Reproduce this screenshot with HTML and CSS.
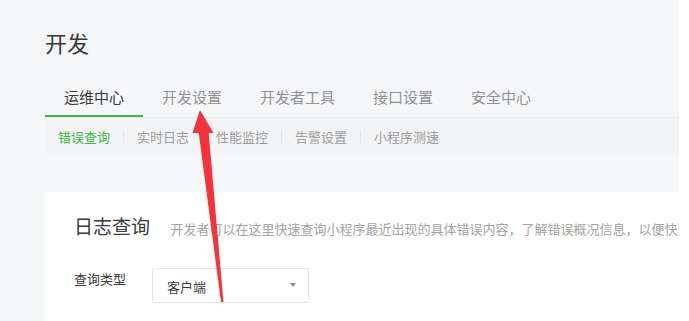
FILE: index.html
```html
<!DOCTYPE html>
<html lang="zh-CN">
  <head>
    <meta charset="UTF-8" />
    <meta name="viewport" content="width=device-width, initial-scale=1.0" />
    <title>开发</title>
    <link rel="stylesheet" href="styles.css">
  </head>
  <body>
    <div class="page">
      <div class="main">
        <h1 class="page-title">开发</h1>

        <!-- 一级导航 -->
        <ul class="tabs">
          <li class="tab active">运维中心</li>
          <li class="tab">开发设置</li>
          <li class="tab">开发者工具</li>
          <li class="tab">接口设置</li>
          <li class="tab">安全中心</li>
        </ul>

        <!-- 二级导航 -->
        <div class="subtabs">
          <span class="subtab active">错误查询</span>
          <span class="sep"></span>
          <span class="subtab">实时日志</span>
          <span class="sep"></span>
          <span class="subtab">性能监控</span>
          <span class="sep"></span>
          <span class="subtab">告警设置</span>
          <span class="sep"></span>
          <span class="subtab">小程序测速</span>
        </div>

        <div class="card">
          <div class="card-head">
            <span class="card-title">日志查询</span>
            <span class="card-desc">开发者可以在这里快速查询小程序最近出现的具体错误内容，了解错误概况信息，以便快速定位问题</span>
          </div>
          <div class="form-row">
            <label class="form-label">查询类型</label>
            <div class="select">
              <span class="select-value">客户端</span>
              <i class="caret"></i>
            </div>
          </div>
        </div>
      </div>

      <!-- 标注箭头 -->
      <svg class="mark-arrow" width="689" height="321" viewBox="0 0 689 321">
        <polygon points="200,110 213.5,133 192.5,133" fill="#f6333a" />
        <polygon points="198.5,131 208.5,131 223.5,302 221,302" fill="#f6333a" />
      </svg>
    </div>
  </body>
</html>
```

FILE: styles.css
```css
* {
  box-sizing: border-box;
}

body {
  margin: 0;
  background: #ffffff;
  font-family: "Noto Sans CJK SC", "Noto Sans", sans-serif;
}

.page {
  position: relative;
  width: 679px;
  height: 321px;
  overflow: hidden;
  background: #f6f7f9;
}

.main {
  margin-left: 45px;
}

.page-title {
  margin: 0;
  padding-top: 27px;
  font-size: 22px;
  line-height: 30px;
  font-weight: normal;
  color: #3a3a3a;
}

.tabs {
  display: flex;
  margin: 29px 0 0;
  padding: 0;
  list-style: none;
  border-bottom: 1px solid #e7e8eb;
}

.tab {
  padding: 0 19px 7px;
  font-size: 15px;
  line-height: 22px;
  color: #919191;
  border-bottom: 2px solid transparent;
}

.tab.active {
  color: #3a3a3a;
  border-bottom-color: #44b549;
}

.subtabs {
  display: flex;
  align-items: center;
  height: 37px;
  padding-left: 13px;
  background: #f3f4f6;
}

.subtab {
  font-size: 13px;
  line-height: 37px;
  color: #9c9c9c;
}

.subtab.active {
  color: #44b549;
}

.sep {
  width: 1px;
  height: 13px;
  margin: 0 13px;
  background: #e3e4e6;
}

.card {
  margin-top: 37px;
  height: 140px;
  padding: 20px 0 0 29px;
  background: #ffffff;
  overflow: hidden;
}

.card-head {
  white-space: nowrap;
}

.card-title {
  font-size: 19px;
  line-height: 28px;
  color: #3a3a3a;
}

.card-desc {
  margin-left: 17px;
  font-size: 13px;
  color: #a3a3a3;
}

.form-row {
  display: flex;
  align-items: flex-start;
  margin-top: 28px;
}

.form-label {
  width: 78px;
  font-size: 13px;
  line-height: 22px;
  color: #3a3a3a;
}

.select {
  display: flex;
  align-items: center;
  justify-content: space-between;
  width: 157px;
  height: 35px;
  padding: 2px 12px 0 14px;
  border: 1px solid #e4e5e7;
  border-radius: 2px;
  background: #ffffff;
}

.select-value {
  font-size: 13px;
  color: #3a3a3a;
}

.caret {
  width: 0;
  height: 0;
  margin-top: -3px;
  border-left: 3.5px solid transparent;
  border-right: 3.5px solid transparent;
  border-top: 4px solid #8a8a8a;
}

.mark-arrow {
  position: absolute;
  left: 0;
  top: 0;
}
```
